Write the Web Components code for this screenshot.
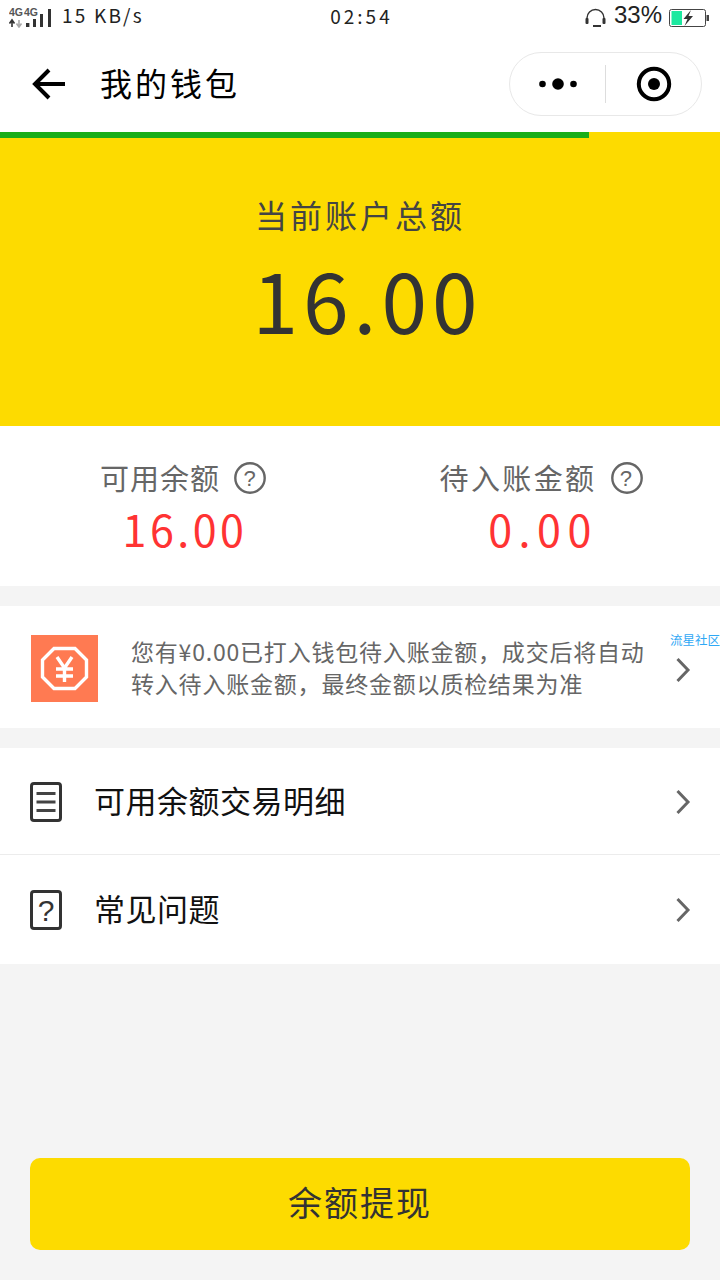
<!DOCTYPE html>
<html lang="zh-CN">
<head>
<meta charset="utf-8">
<title>我的钱包</title>
<style>
    html, body { margin: 0; padding: 0; }
    body {
        width: 720px;
        height: 1280px;
        overflow: hidden;
        background: #f4f4f4;
        font-family: "Noto Sans CJK SC", "Noto Sans", sans-serif;
        display: flex;
        flex-direction: column;
    }
</style>
</head>
<body>
<status-bar></status-bar>
<nav-bar>我的钱包</nav-bar>
<wallet-hero label="当前账户总额" amount="16.00" progress="589"></wallet-hero>
<balance-panel>
    <balance-cell label="可用余额" amount="16.00"></balance-cell>
    <balance-cell label="待入账金额" amount="0.00" style="--label-spacing: 2.4px; --amount-spacing: 6.5px; padding-right: 4px;"></balance-cell>
</balance-panel>
<notice-card>您有¥0.00已打入钱包待入账金额，成交后将自动转入待入账金额，最终金额以质检结果为准</notice-card>
<menu-list>
    <menu-row icon="list">可用余额交易明细</menu-row>
    <menu-row icon="help">常见问题</menu-row>
</menu-list>
<primary-button>余额提现</primary-button>

<script>
const CHEVRON = `<svg width="16" height="26" viewBox="0 0 16 26"><path d="M2.5 2 L13 13 L2.5 24" fill="none" stroke="#666" stroke-width="3"/></svg>`;

class StatusBar extends HTMLElement {
	constructor() {
		super();
		this.attachShadow({ mode: "open" }).innerHTML = `
<style>
    :host { display: flex; align-items: center; height: 36px; padding: 0 11px 0 9px; background: #fff; color: #111; flex: none; }
    .net { margin-top: -4px; }
    .speed { margin: -6px 0 0 9px; font-size: 19px; line-height: 24px; letter-spacing: 2.2px; color: #222; white-space: nowrap; width: 92px; }
    .time { flex: 1; text-align: center; font-size: 19px; line-height: 24px; letter-spacing: 3px; padding-right: 16px; margin-top: -4px; color: #222; }
    .pct { font-family: "Liberation Sans", sans-serif; font-size: 24px; line-height: 26px; color: #222; margin: -6px 7px 0 8px; }
    svg { display: block; }
</style>
<svg class="net" width="44" height="24" viewBox="0 -4 44 24">
    <text x="0" y="8" font-family="Liberation Sans" font-size="10.5" font-weight="700" fill="#555">4G</text>
    <text x="15" y="8" font-family="Liberation Sans" font-size="10.5" font-weight="700" fill="#555">4G</text>
    <path d="M3 19v-6M0.5 15.5 L3 12 L5.5 15.5" stroke="#333" stroke-width="1.6" fill="none"/>
    <path d="M10 12v6M7.5 15.5 L10 19 L12.5 15.5" stroke="#aaa" stroke-width="1.6" fill="none"/>
    <rect x="17" y="15" width="3.4" height="4" fill="#333"/>
    <rect x="24" y="11" width="3" height="8" fill="#333"/>
    <rect x="31" y="6" width="3" height="13" fill="#333"/>
    <rect x="39" y="1" width="3" height="18" fill="#333"/>
</svg>
<div class="speed">15 KB/s</div>
<div class="time">02:54</div>
<svg width="21" height="20" viewBox="0 0 21 20">
    <path d="M2 13V10a8.5 8.5 0 0 1 17 0v3" fill="none" stroke="#333" stroke-width="1.4"/>
    <rect x="0.5" y="10" width="3" height="6" rx="1" fill="#333"/>
    <rect x="17.5" y="10" width="3" height="6" rx="1" fill="#333"/>
    <path d="M8 18h8" stroke="#333" stroke-width="2"/>
</svg>
<div class="pct">33%</div>
<svg width="40" height="18" viewBox="0 0 40 18">
    <rect x="0.5" y="0.5" width="36" height="17" rx="2" fill="#fff" stroke="#444"/>
    <rect x="2.5" y="2" width="10.5" height="14" fill="#1de9a0"/>
    <path d="M22 1 L14.5 10 H18.5 L15.5 17 L24 7 H19.5 Z" fill="#333"/>
    <rect x="37.5" y="6" width="2.5" height="6" fill="#444"/>
</svg>`;
	}
}
customElements.define("status-bar", StatusBar);

class NavBar extends HTMLElement {
	constructor() {
		super();
		this.attachShadow({ mode: "open" }).innerHTML = `
<style>
    :host { display: flex; align-items: center; height: 96px; padding: 0 18px 0 32px; background: #fff; flex: none; box-sizing: border-box; }
    .title { flex: 1; margin: -4px 0 0 34px; font-size: 32px; letter-spacing: 3px; line-height: 1; color: #000; }
    .capsule { display: flex; align-items: center; width: 193px; height: 64px; box-sizing: border-box; border: 1px solid #e8e8e8; border-radius: 32px; }
    .half { flex: 1; display: flex; justify-content: center; align-items: center; }
    .sep { width: 1px; height: 38px; background: #ddd; }
    svg { display: block; }
</style>
<svg width="34" height="32" viewBox="0 0 34 32"><path d="M17 2 L3 16 L17 30 M3 16 H33" fill="none" stroke="#000" stroke-width="4"/></svg>
<div class="title"><slot></slot></div>
<div class="capsule">
    <div class="half"><svg width="38" height="12" viewBox="0 0 38 12"><circle cx="3.5" cy="6" r="3.3"/><circle cx="19" cy="6" r="5.8"/><circle cx="34.5" cy="6" r="3.3"/></svg></div>
    <div class="sep"></div>
    <div class="half"><svg width="36" height="36" viewBox="0 0 36 36"><circle cx="18" cy="18" r="15.2" fill="none" stroke="#000" stroke-width="4"/><circle cx="18" cy="18" r="6"/></svg></div>
</div>`;
	}
}
customElements.define("nav-bar", NavBar);

class WalletHero extends HTMLElement {
	constructor() {
		super();
		this.attachShadow({ mode: "open" }).innerHTML = `
<style>
    :host { display: block; height: 294px; background: #fddb00; color: #333; flex: none; }
    .bar { height: 6px; background: #1aad19; }
    .body { display: flex; flex-direction: column; align-items: center; }
    .label { margin-top: 56px; font-size: 32px; line-height: 40px; letter-spacing: 3px; color: #444; }
    .amount { margin: 25px 0 0 15px; font-size: 82px; line-height: 80px; letter-spacing: 5px; color: #333; }
</style>
<div class="bar"></div>
<div class="body">
    <div class="label"></div>
    <div class="amount"></div>
</div>`;
	}
	connectedCallback() {
		this.shadowRoot.querySelector(".bar").style.width = this.getAttribute("progress") + "px";
		this.shadowRoot.querySelector(".label").textContent = this.getAttribute("label");
		this.shadowRoot.querySelector(".amount").textContent = this.getAttribute("amount");
	}
}
customElements.define("wallet-hero", WalletHero);

class BalancePanel extends HTMLElement {
	constructor() {
		super();
		this.attachShadow({ mode: "open" }).innerHTML = `
<style>
    :host { display: grid; grid-template-columns: 366px 354px; height: 160px; background: #fff; flex: none; }
</style>
<slot></slot>`;
	}
}
customElements.define("balance-panel", BalancePanel);

class BalanceCell extends HTMLElement {
	constructor() {
		super();
		this.attachShadow({ mode: "open" }).innerHTML = `
<style>
    :host { display: flex; flex-direction: column; align-items: center; padding-top: 32px; }
    .head { display: flex; align-items: center; gap: 14px; height: 40px; font-size: 29px; letter-spacing: var(--label-spacing, 1px); color: #666; }
    .label { margin-top: -2px; }
    .amount { margin: 2px 0 0 4px; font-size: 43px; line-height: 56px; letter-spacing: var(--amount-spacing, 3.5px); color: #ff3333; }
    svg { display: block; }
</style>
<div class="head">
    <span class="label"></span>
    <svg width="32" height="32" viewBox="0 0 32 32">
        <circle cx="16" cy="16" r="14.7" fill="none" stroke="#666" stroke-width="2.4"/>
        <text x="16" y="24" text-anchor="middle" font-family="Liberation Sans" font-size="22" fill="#666">?</text>
    </svg>
</div>
<div class="amount"></div>`;
	}
	connectedCallback() {
		this.shadowRoot.querySelector(".label").textContent = this.getAttribute("label");
		this.shadowRoot.querySelector(".amount").textContent = this.getAttribute("amount");
	}
}
customElements.define("balance-cell", BalanceCell);

class NoticeCard extends HTMLElement {
	constructor() {
		super();
		this.attachShadow({ mode: "open" }).innerHTML = `
<style>
    :host { display: flex; align-items: center; position: relative; height: 122px; margin-top: 20px; padding: 0 29px 0 31px; background: #fff; flex: none; overflow: hidden; }
    .icon { margin-top: 2px; }
    .text { width: 524px; margin-left: 33px; font-size: 23px; line-height: 32px; color: #666; letter-spacing: 0.8px; }
    .chev { margin: 6px 0 0 auto; }
    .mark { position: absolute; left: 670px; top: 26px; font-size: 12.5px; line-height: 16px; color: #2fa8f5; white-space: nowrap; }
    svg { display: block; }
</style>
<svg class="icon" width="67" height="67" viewBox="0 0 67 67">
    <rect width="67" height="67" fill="#ff7a52"/>
    <path d="M23 13.5 H44 L55.5 25 V42 L44 53.5 H23 L11.5 42 V25 Z" fill="none" stroke="#fff" stroke-width="3.4"/>
    <path d="M26 22 L33.5 33 L41 22 M33.5 33 V47 M25 34 H42 M25 41 H42" fill="none" stroke="#fff" stroke-width="3.4"/>
</svg>
<div class="text"><slot></slot></div>
<div class="chev">${CHEVRON}</div>
<div class="mark">流星社区</div>`;
	}
}
customElements.define("notice-card", NoticeCard);

class MenuList extends HTMLElement {
	constructor() {
		super();
		this.attachShadow({ mode: "open" }).innerHTML = `
<style>
    :host { display: block; margin-top: 20px; background: #fff; flex: none; }
    ::slotted(menu-row:first-child) { height: 106px; padding-top: 2px; }
    ::slotted(menu-row:not(:first-child)) { height: 110px; border-top: 1px solid #ececec; }
</style>
<slot></slot>`;
	}
}
customElements.define("menu-list", MenuList);

const MENU_ICONS = {
	list: `<path d="M6.5 11.5 H25.5 M6.5 20 H25.5 M6.5 28.5 H25.5" stroke="#444" stroke-width="3"/>`,
	help: `<text x="16" y="31" text-anchor="middle" font-family="Liberation Sans" font-size="30" fill="#333">?</text>`
};

class MenuRow extends HTMLElement {
	constructor() {
		super();
		this.attachShadow({ mode: "open" }).innerHTML = `
<style>
    :host { display: flex; align-items: center; padding: 0 29px 0 30px; box-sizing: border-box; flex: none; }
    .label { flex: 1; margin: -5px 0 0 32px; font-size: 31px; letter-spacing: 0.5px; color: #111; }
    svg { display: block; }
</style>
<svg class="icon" width="32" height="40" viewBox="0 0 32 40"></svg>
<div class="label"><slot></slot></div>
${CHEVRON}`;
	}
	connectedCallback() {
		const icon = this.shadowRoot.querySelector(".icon");
		icon.innerHTML = `<rect x="1.5" y="1.5" width="29" height="37" rx="2.5" fill="none" stroke="#333" stroke-width="3"/>` + MENU_ICONS[this.getAttribute("icon")];
	}
}
customElements.define("menu-row", MenuRow);

class PrimaryButton extends HTMLElement {
	constructor() {
		super();
		this.attachShadow({ mode: "open" }).innerHTML = `
<style>
    :host { display: flex; justify-content: center; align-items: center; height: 92px; box-sizing: border-box; padding-bottom: 6px; margin: auto 30px 30px; background: #fddb00; border-radius: 10px; font-size: 34px; letter-spacing: 2px; color: #333; flex: none; }
</style>
<slot></slot>`;
	}
}
customElements.define("primary-button", PrimaryButton);
</script>
</body>
</html>
